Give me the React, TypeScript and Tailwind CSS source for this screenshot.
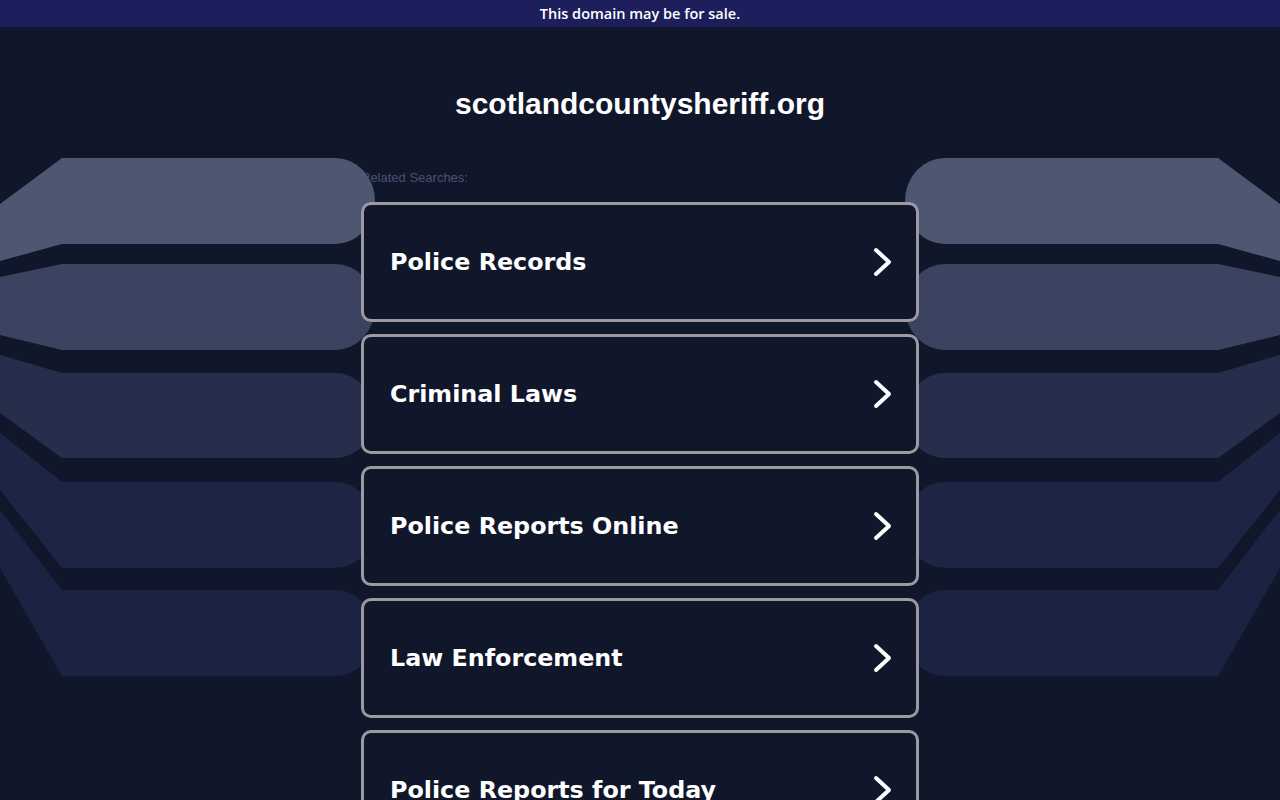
import React from "react";

const searches = [
  "Police Records",
  "Criminal Laws",
  "Police Reports Online",
  "Law Enforcement",
  "Police Reports for Today",
];

// stacked slabs drawn on both sides of the list
const bands = [
  { top: 158, bot: 244, tl: 204, bl: 261, fill: "#4e5772" },
  { top: 264, bot: 350, tl: 277, bl: 335, fill: "#3b4360" },
  { top: 373, bot: 458, tl: 355, bl: 413, fill: "#262e4b" },
  { top: 482, bot: 568, tl: 433, bl: 490, fill: "#1d2444" },
  { top: 590, bot: 676, tl: 510, bl: 568, fill: "#1b2342" },
];

function bandPath(b: (typeof bands)[number]) {
  const h = (b.bot - b.top) / 2;
  return `M0,${b.tl} L62,${b.top} L335,${b.top} A40,${h} 0 0 1 375,${b.top + h} A40,${h} 0 0 1 335,${b.bot} L62,${b.bot} L0,${b.bl} Z`;
}

function Backdrop() {
  return (
    <svg
      className="absolute top-0 left-0 w-[1280px] h-[800px] pointer-events-none z-10"
      viewBox="0 0 1280 800"
      aria-hidden="true"
    >
      <g>
        {bands.map((b, i) => (
          <path key={i} d={bandPath(b)} fill={b.fill} />
        ))}
      </g>
      <g transform="translate(1280,0) scale(-1,1)">
        {bands.map((b, i) => (
          <path key={i} d={bandPath(b)} fill={b.fill} />
        ))}
      </g>
    </svg>
  );
}

function Chevron() {
  return (
    <svg width="20" height="30" viewBox="0 0 20 30" fill="none" aria-hidden="true">
      <polyline
        points="4,3 17,15 4,27"
        stroke="#ffffff"
        strokeWidth="4"
        strokeLinecap="round"
        strokeLinejoin="round"
      />
    </svg>
  );
}

export default function App() {
  return (
    <div className="relative min-h-screen overflow-hidden bg-[#11172b]">
      {/* ── Sale banner ── */}
      <div className="h-[27px] bg-[#1c1f5c] flex items-center justify-center">
        <span className="text-white text-[14.5px] font-semibold font-['Open_Sans',sans-serif]">
          This domain may be for sale.
        </span>
      </div>

      <Backdrop />

      <div className="w-[558px] mx-auto">
        <h1 className="mt-[60px] text-center text-white text-[30px] leading-[34px] font-bold font-['Liberation_Sans',Arial,sans-serif]">
          scotlandcountysheriff.org
        </h1>

        <p className="relative z-0 mt-[49px] text-[13px] leading-[16px] text-[#4a5170] font-['Liberation_Sans',Arial,sans-serif]">
          Related Searches:
        </p>

        {/* ── Search cards ── */}
        <div className="relative z-20 mt-[16px] flex flex-col gap-[12px]">
          {searches.map((label) => (
            <a
              key={label}
              href="#"
              className="h-[120px] shrink-0 flex items-center justify-between pl-[26px] pr-[24px] rounded-[10px] border-[3px] border-[#9a9aa0] bg-[#11172b] no-underline"
            >
              <span className="pt-[2px] text-white text-[23.8px] font-bold font-['DejaVu_Sans',Verdana,sans-serif]">
                {label}
              </span>
              <Chevron />
            </a>
          ))}
        </div>
      </div>
    </div>
  );
}
